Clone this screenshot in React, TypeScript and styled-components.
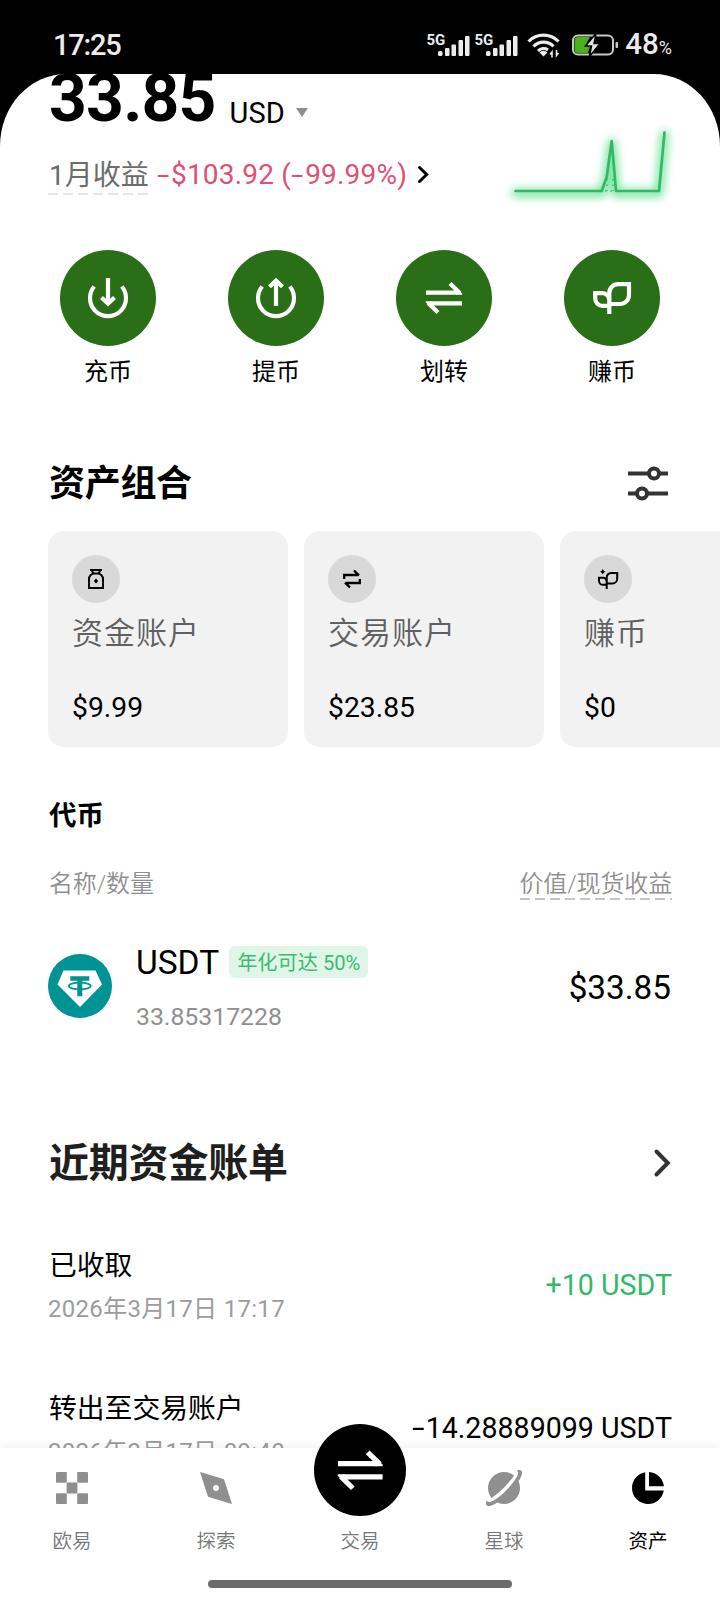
import React from "react";
import styled, { createGlobalStyle } from "styled-components";

const GlobalStyle = createGlobalStyle`
  * { box-sizing: border-box; }
  body {
    margin: 0;
    background: #000;
    font-family: Roboto, "Noto Sans CJK SC", sans-serif;
    color: #000;
  }
  svg { display: block; flex: none; overflow: visible; }
`;

const Screen = styled.div`
  width: 720px;
  height: 1600px;
  display: flex;
  flex-direction: column;
  overflow: hidden;
  background: #000;
`;

const StatusBar = styled.header`
  height: 74px;
  flex: none;
  display: flex;
  align-items: center;
  justify-content: space-between;
  padding: 16px 48px 0 53px;
  color: #ececec;
`;

const Clock = styled.span`
  font-size: 29px;
  line-height: 32px;
  font-weight: 500;
  letter-spacing: -1.2px;
`;

const StatusIcons = styled.div`
  display: flex;
  align-items: center;
`;

const Signals = styled.div`
  display: flex;
  margin-right: 5px;
`;

const Battery = styled.span`
  margin: 2px 0 0 7px;
  font-size: 29.5px;
  line-height: 32px;
  font-weight: 500;
  small { font-size: 18px; font-weight: 400; }
`;

const Sheet = styled.main`
  flex: 1;
  min-height: 0;
  overflow: hidden;
  background: #fff;
  border-radius: 66px 66px 0 0 / 72px 72px 0 0;
  padding: 0 48px;
`;

const Hero = styled.section`
  display: flex;
  justify-content: space-between;
  height: 122px;
  margin-top: -4px;
`;

const Balance = styled.div`
  display: flex;
  align-items: flex-end;
  height: 57px;
`;

const BalanceValue = styled.span`
  margin-left: 1px;
  font-size: 66px;
  line-height: 57px;
  font-weight: 700;
  letter-spacing: -0.8px;
`;

const Currency = styled.span`
  margin: 0 11px 0 14px;
  font-size: 29px;
  line-height: 28px;
`;

const Caret = styled.i`
  margin-bottom: 10px;
  border: 6.5px solid transparent;
  border-top: 9px solid #8e8e8e;
  border-bottom: 0;
`;

const Profit = styled.div`
  display: flex;
  align-items: flex-start;
  margin-top: 28px;
  line-height: 40px;
  font-size: 28px;
`;

const dashes = (color: string) =>
  `repeating-linear-gradient(90deg, ${color} 0 10px, transparent 10px 15px)`;

const Dashed = styled.span<{ $line: string }>`
  background: ${(p) => dashes(p.$line)} left bottom / 100% 2px no-repeat;
`;

const Period = styled(Dashed)`
  width: 100px;
  color: #6c6c6c;
  padding-left: 1px;
  line-height: 41px;
  height: 40px;
  white-space: nowrap;
`;

const Loss = styled.span`
  margin: 0 11px 0 9px;
  line-height: 40px;
  color: #df4f76;
  letter-spacing: 0.2px;
  white-space: nowrap;
`;

const Minus = styled.span`
  display: inline-block;
  width: 14px;
  transform: scaleX(1.6);
  transform-origin: left;
`;

const ChartSlot = styled.div`
  margin-top: 58px;
`;

const Actions = styled.nav`
  display: flex;
  justify-content: space-between;
  margin-top: 58px;
  padding: 0 12px;
`;

const Action = styled.div`
  width: 96px;
  display: flex;
  flex-direction: column;
  align-items: center;
  font-size: 24px;
  line-height: 32px;
`;

const ActionDisc = styled.div`
  width: 96px;
  height: 96px;
  margin-bottom: 10px;
  border-radius: 50%;
  background: #2a6e17;
  display: flex;
  align-items: center;
  justify-content: center;
`;

const TitleRow = styled.div<{ $top: number }>`
  display: flex;
  align-items: center;
  justify-content: space-between;
  margin-top: ${(p) => p.$top}px;
`;

const PortfolioTitle = styled.h2`
  margin: 0;
  padding: 1px 0 0 1px;
  font-size: 36px;
  line-height: 47px;
  font-weight: 700;
  letter-spacing: -0.3px;
`;

const Cards = styled.div`
  display: flex;
  gap: 16px;
  margin-top: 23px;
`;

const Card = styled.article`
  flex: none;
  width: 240px;
  height: 216px;
  padding: 24px;
  border-radius: 16px;
  background: #f2f2f2;
`;

const CardIcon = styled.div`
  width: 48px;
  height: 48px;
  border-radius: 50%;
  background: #d8d8d8;
  display: flex;
  align-items: center;
  justify-content: center;
`;

const CardLabel = styled.div`
  margin-top: 9px;
  font-size: 31px;
  line-height: 44px;
  letter-spacing: 1px;
  font-weight: 350;
  color: #606060;
`;

const CardValue = styled.div`
  margin-top: 36px;
  font-size: 28.3px;
  line-height: 32px;
`;

const TokensTitle = styled.h3`
  margin: 49px 0 0 1px;
  font-size: 27.5px;
  line-height: 40px;
  font-weight: 700;
`;

const ColumnHeads = styled.div`
  display: flex;
  justify-content: space-between;
  margin-top: 32px;
  padding-left: 1px;
  font-size: 24px;
  line-height: 32px;
  font-weight: 350;
  letter-spacing: -0.15px;
  color: #8f8f8f;
`;

const TokenRow = styled.div`
  display: flex;
  align-items: center;
  margin-top: 41px;
  height: 90px;
`;

const TokenInfo = styled.div`
  flex: 1;
  margin-left: 24px;
  padding-top: 3px;
`;

const TokenName = styled.div`
  display: flex;
  align-items: center;
  gap: 10px;
  font-size: 33.5px;
  line-height: 40px;
`;

const Badge = styled.span`
  height: 32px;
  margin-bottom: 2px;
  padding: 0 8px;
  border-radius: 6px;
  background: #dff5e7;
  color: #3abd70;
  font-size: 20.2px;
  line-height: 34px;
`;

const TokenAmount = styled.div`
  margin-top: 18px;
  font-size: 24.8px;
  line-height: 32px;
  color: #8f8f8f;
`;

const TokenValue = styled.div`
  margin-right: 1px;
  padding-top: 4px;
  font-size: 33.3px;
  line-height: 40px;
`;

const BillsTitle = styled.h2`
  margin: 0;
  padding: 3px 0 0 1px;
  font-size: 40px;
  line-height: 54px;
  font-weight: 700;
  letter-spacing: -0.2px;
  color: #1f1f1f;
`;

const Bill = styled.div<{ $top: number }>`
  display: flex;
  align-items: center;
  justify-content: space-between;
  height: 80px;
  margin-top: ${(p) => p.$top}px;
`;

const BillTitle = styled.div`
  padding-left: 1px;
  font-size: 27.8px;
  line-height: 40px;
`;

const BillDate = styled.div`
  margin-top: 7px;
  font-size: 24px;
  line-height: 32px;
  color: #9c9c9c;
  letter-spacing: 0.3px;
`;

const BillAmount = styled.div<{ $income?: boolean }>`
  font-size: 28.6px;
  line-height: 40px;
  color: ${(p) => (p.$income ? "#31b968" : "#000")};
`;

const TabBar = styled.footer`
  position: relative;
  flex: none;
  height: 152px;
  background: #fff;
  box-shadow: 0 -2px 8px rgba(0, 0, 0, 0.06);
`;

const Tabs = styled.nav`
  display: flex;
  height: 132px;
`;

const Tab = styled.div<{ $active?: boolean }>`
  flex: 1;
  display: flex;
  flex-direction: column;
  align-items: center;
  justify-content: flex-end;
  gap: 26px;
  padding-bottom: 26px;
  font-size: 19.5px;
  line-height: 24px;
  font-weight: ${(p) => (p.$active ? 400 : 350)};
  color: ${(p) => (p.$active ? "#000" : "#777")};
`;

const TradeDisc = styled.div`
  flex: none;
  width: 92px;
  height: 92px;
  margin-bottom: -12px;
  border-radius: 50%;
  background: #000;
  display: flex;
  align-items: center;
  justify-content: center;
`;

const HomeIndicator = styled.div`
  width: 304px;
  height: 8px;
  margin: 0 auto;
  border-radius: 4px;
  background: #6b6b6b;
`;

const SignalIcon = () => (
  <svg width="48" height="24" viewBox="0 0 48 24" fill="#ececec">
    <text x="0.500" y="11.500" fontSize="15" fontWeight="700" letterSpacing="-0.2">5G</text>
    <rect x="12" y="18" width="4.500" height="5" rx="1.500" />
    <rect x="19" y="15" width="4.500" height="8" rx="1" />
    <rect x="25.500" y="11.500" width="4.500" height="11.500" rx="1" />
    <rect x="32.500" y="7" width="4.500" height="16" rx="1" />
    <rect x="39" y="3" width="4.500" height="20" rx="1" />
  </svg>
);

const WifiIcon = () => (
  <svg width="34" height="26" viewBox="0 0 34 26" fill="none" stroke="#ececec" strokeWidth="3.200">
    <path d="M1.500 9.500a21 21 0 0 1 30 0M6.500 14.500a14 14 0 0 1 20-.2M11 19a8 8 0 0 1 10-1.200" />
    <path d="M16.500 24.500l-4-4a5.500 5.500 0 0 1 8 0z" fill="#ececec" stroke="none" />
    <path d="M25 25.500v-5.500l-2 2.500M29.500 18v5.500l2-2.500" strokeWidth="1.600" />
  </svg>
);

const BatteryIcon = () => (
  <svg width="46" height="22" viewBox="0 0 46 22" fill="none">
    <rect x="1" y="1.500" width="40" height="19" rx="5" stroke="#c9c9c9" strokeWidth="2" />
    <path d="M6 3h12l-5 9h5l-2 7H6a3.500 3.500 0 0 1-3.500-3.500v-9A3.500 3.500 0 0 1 6 3z" fill="#4db01a" />
    <path d="M24 -.500L13.500 12h6L17.500 22.500 28 9.500h-6z" fill="#e4e4e4" stroke="#000" strokeWidth="1.500" />
    <rect x="43.500" y="8" width="2.500" height="6" rx="1" fill="#c9c9c9" />
  </svg>
);

const ProfitChart = () => {
  const line = "M3.500 63H89.700L94.700 49 99.700 13 104 63H147L152.500 4.500";
  return (
    <svg width="160" height="70" viewBox="0 0 160 70" fill="none" strokeLinejoin="round" strokeLinecap="round">
      <defs>
        <filter id="glow" x="-20%" y="-40%" width="140%" height="180%">
          <feGaussianBlur stdDeviation="4.500" />
        </filter>
      </defs>
      <path d={line} transform="translate(0 2)" stroke="#5fe08d" strokeOpacity="0.800" strokeWidth="9" filter="url(#glow)" />
      <path d={line} stroke="#31b968" strokeWidth="2.700" />
      <path d="M95 51v12M101 51v12" stroke="#31b968" strokeWidth="1.400" strokeLinecap="butt" strokeDasharray="1.500 4" />
      <path d="M93 63h9" stroke="#31b968" strokeWidth="1.400" strokeLinecap="butt" strokeDasharray="1.500 4" />
    </svg>
  );
};

const ChevronSmall = () => (
  <svg width="12" height="40" viewBox="0 0 12 40" fill="none" stroke="#000" strokeWidth="3">
    <path d="M1.500 12.500l7.200 7-7.200 7" strokeLinecap="round" />
  </svg>
);

const ChevronLarge = () => (
  <svg width="18" height="28" viewBox="0 0 18 28" fill="none" stroke="#333" strokeWidth="4">
    <path d="M2.500 2.500L13.800 14 2.500 25.500" strokeLinecap="round" />
  </svg>
);

const centered = {
  width: 44,
  height: 44,
  viewBox: "-22 -22 44 44",
  fill: "none",
  stroke: "#fff",
  strokeWidth: 4.2,
};

const DepositIcon = () => (
  <svg {...centered}>
    <path d="M-13.800 -11.500A18 18 0 1 0 13.800 -11.500M0 -20V6M-6.500 -.500L0 5.600 6.500 -.500" />
  </svg>
);

const WithdrawIcon = () => (
  <svg {...centered}>
    <path d="M-13.800 -11.500A18 18 0 1 0 13.800 -11.500M0 8V-17M-6.500 -11.200L0 -17.300 6.500 -11.200" />
  </svg>
);

const TransferIcon = ({ scale = 1 }: { scale?: number }) => (
  <svg {...centered} width={44 * scale} height={44 * scale}>
    <path d="M-18 -5.300H14M6 -14.500L15.800 -4.900M18 5.300H-14M-6 14.500L-15.800 4.900" />
    <path d="M13 -9.300L18.200 -4.500V-3.200H12zM-13 9.300L-18.200 4.500V3.200H-12z" fill="#fff" stroke="none" />
  </svg>
);

const EarnIcon = () => (
  <svg {...centered}>
    <path d="M-2.700 16V-5A8.800 8.800 0 0 1 6.100 -13.800H17V-3A9 9 0 0 1 8 6H-2.700" />
    <path d="M-2.700 7.800H-9.500A7.300 7.300 0 0 1 -16.800 .500V-4.800H-9.500A6.800 6.800 0 0 1 -2.700 2" />
  </svg>
);

const FilterIcon = () => (
  <svg width="44" height="36" viewBox="0 0 44 36" fill="none" stroke="#333" strokeWidth="4">
    <path d="M0 7.500H21M31 7.500H40M0 27.500H9M19 27.500H40" />
    <circle cx="26" cy="7.500" r="5" />
    <circle cx="14" cy="27.500" r="5" />
  </svg>
);

const small = { width: 24, height: 24, viewBox: "-12 -12 24 24", fill: "none", stroke: "#000", strokeWidth: 2 };

const BagIcon = () => (
  <svg {...small}>
    <path d="M-6 -9H6M-4.500 -9L-2.500 -5.500H2.500L4.500 -9M-7 9V0A5.500 5.500 0 0 1 -1.500 -5.500H1.500A5.500 5.500 0 0 1 7 0V9Z" />
    <path d="M0 -.500L2.200 2 0 4.500 -2.200 2z" fill="#000" stroke="none" />
  </svg>
);

const ExchangeIcon = () => (
  <svg {...small} strokeWidth="2.300">
    <path d="M-7.800 0V-4H6.500M2 -8.500L7 -3.600M7.800 0V4H-6.500M-2 8.500L-7 3.600" />
  </svg>
);

const SproutIcon = () => (
  <svg {...small}>
    <path d="M-1.300 10V-1.500A4.500 4.500 0 0 1 3.200 -6H9.200V-.300A4.800 4.800 0 0 1 4.400 4.500H-1.300" />
    <path d="M-1.300 5.800H-5A4 4 0 0 1 -9 2V-1.300H-5A3.700 3.700 0 0 1 -1.300 2.400" />
    <path d="M-5.300 -10L-4.300 -8.300 -2.600 -7.300 -4.300 -6.300 -5.300 -4.600 -6.300 -6.300 -8 -7.300 -6.300 -8.300z" fill="#000" stroke="none" />
  </svg>
);

const TetherIcon = () => (
  <svg width="64" height="64" viewBox="-32 -32 64 64">
    <circle r="32" fill="#009393" />
    <path d="M-16.500 -15.500H15.500L22 -1.500 0 21 -22.500 -1.500z" fill="#fff" />
    <path d="M-9.700 -9.800H9.300V-5.200H2.300V10.300H-2.700V-5.200H-9.700z" fill="#009393" />
    <ellipse cx="-.2" cy="0" rx="11" ry="3.300" fill="none" stroke="#009393" strokeWidth="1.700" />
  </svg>
);

const tabIcon = { width: 32, height: 32, viewBox: "-16 -16 32 32", fill: "#8f8f8f" };

const HomeIcon = () => (
  <svg {...tabIcon}>
    {[[-16, -16], [5.2, -16], [-5.4, -5.4], [-16, 5.2], [5.2, 5.2]].map(([x, y]) => (
      <rect key={`${x},${y}`} x={x} y={y} width="10.800" height="10.800" rx="0.800" />
    ))}
  </svg>
);

const ExploreIcon = () => (
  <svg {...tabIcon}>
    <path d="M-16 -16L8 -8.700 16 16 -8 8.700z" />
    <circle r="3" fill="#fff" />
  </svg>
);

const PlanetIcon = () => (
  <svg {...tabIcon}>
    <circle r="16" />
    <path d="M-17 14Q-12 14.500 1.500 1.500 14 -11 14.500 -17" fill="none" stroke="#fff" strokeWidth="5" />
    <path d="M13 -17.500C16 -18.800 19 -17.500 18 -14C16 -7 9 1 3.500 6.500C-2 11.500 -9 17 -14.500 18C-18 18.500 -19 15.500 -17 12.500C-15.500 14.500 -15 14.500 -13 13.700C-7 11.500 0 5 4 .500C9 -5 13 -10.500 14 -14C14.500 -16 14 -16 13 -17.500z" />
  </svg>
);

const AssetsIcon = () => (
  <svg {...tabIcon} fill="#000">
    <path d="M-2.800 -15.800V2.500H15.800A16 16 0 1 1 -2.800 -15.800z" />
    <path d="M1 -16A16 16 0 0 1 15.900 -1.700H1z" />
  </svg>
);

const actions = [
  { label: "充币", icon: <DepositIcon /> },
  { label: "提币", icon: <WithdrawIcon /> },
  { label: "划转", icon: <TransferIcon /> },
  { label: "赚币", icon: <EarnIcon /> },
];

const accounts = [
  { label: "资金账户", value: "$9.99", icon: <BagIcon /> },
  { label: "交易账户", value: "$23.85", icon: <ExchangeIcon /> },
  { label: "赚币", value: "$0", icon: <SproutIcon /> },
];

export default function App() {
  return (
    <Screen>
      <GlobalStyle />
      <StatusBar>
        <Clock>17:25</Clock>
        <StatusIcons>
          <Signals>
            <SignalIcon />
            <SignalIcon />
          </Signals>
          <WifiIcon />
          <svg width="11" height="1" />
          <BatteryIcon />
          <Battery>48<small>%</small></Battery>
        </StatusIcons>
      </StatusBar>

      <Sheet>
        <Hero>
          <div>
            <Balance>
              <BalanceValue>33.85</BalanceValue>
              <Currency>USD</Currency>
              <Caret />
            </Balance>
            <Profit>
              <Period $line="#e6e6e6">1月收益</Period>
              <Loss><Minus>-</Minus>$103.92 (<Minus>-</Minus>99.99%)</Loss>
              <ChevronSmall />
            </Profit>
          </div>
          <ChartSlot>
            <ProfitChart />
          </ChartSlot>
        </Hero>

        <Actions>
          {actions.map((a) => (
            <Action key={a.label}>
              <ActionDisc>{a.icon}</ActionDisc>
              {a.label}
            </Action>
          ))}
        </Actions>

        <TitleRow $top={72}>
          <PortfolioTitle>资产组合</PortfolioTitle>
          <FilterIcon />
        </TitleRow>
        <Cards>
          {accounts.map((a) => (
            <Card key={a.label}>
              <CardIcon>{a.icon}</CardIcon>
              <CardLabel>{a.label}</CardLabel>
              <CardValue>{a.value}</CardValue>
            </Card>
          ))}
        </Cards>

        <TokensTitle>代币</TokensTitle>
        <ColumnHeads>
          <span>名称/数量</span>
          <Dashed $line="#c6c6c6">价值/现货收益</Dashed>
        </ColumnHeads>
        <TokenRow>
          <TetherIcon />
          <TokenInfo>
            <TokenName>
              USDT <Badge>年化可达 50%</Badge>
            </TokenName>
            <TokenAmount>33.85317228</TokenAmount>
          </TokenInfo>
          <TokenValue>$33.85</TokenValue>
        </TokenRow>

        <TitleRow $top={103}>
          <BillsTitle>近期资金账单</BillsTitle>
          <ChevronLarge />
        </TitleRow>
        <Bill $top={54}>
          <div>
            <BillTitle>已收取</BillTitle>
            <BillDate>2026年3月17日 17:17</BillDate>
          </div>
          <BillAmount $income>+10 USDT</BillAmount>
        </Bill>
        <Bill $top={63}>
          <div>
            <BillTitle>转出至交易账户</BillTitle>
            <BillDate>2026年3月17日 09:40</BillDate>
          </div>
          <BillAmount><Minus>-</Minus>14.28889099 USDT</BillAmount>
        </Bill>
      </Sheet>

      <TabBar>
        <Tabs>
          <Tab><HomeIcon />欧易</Tab>
          <Tab><ExploreIcon />探索</Tab>
          <Tab><TradeDisc><TransferIcon scale={1.24} /></TradeDisc>交易</Tab>
          <Tab><PlanetIcon />星球</Tab>
          <Tab $active><AssetsIcon />资产</Tab>
        </Tabs>
        <HomeIndicator />
      </TabBar>
    </Screen>
  );
}
